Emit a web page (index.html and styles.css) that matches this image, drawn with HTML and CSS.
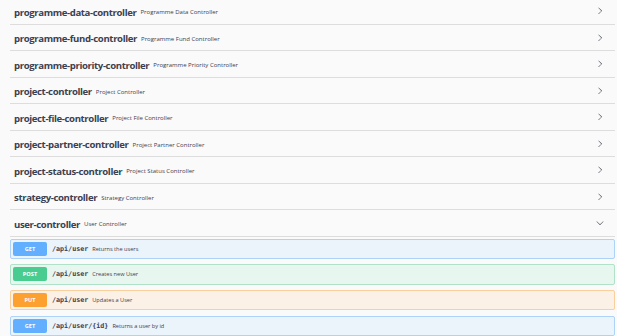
FILE: index.html
```html
<!DOCTYPE html>
<html lang="en">
<head>
<meta charset="utf-8">
<title>API</title>
<link rel="stylesheet" href="styles.css">
</head>
<body>
<div class="wrap">
  <div class="tag"><span class="tag-name">programme-data-controller</span><span class="tag-desc">Programme Data Controller</span><svg class="arrow" viewBox="0 0 20 20"><path d="M13.25 10L6.109 2.58a.697.697 0 0 1 .979-.979l7.63 7.450c.26.26.26.68 0 .94l-7.63 7.45a.697.697 0 0 1-.98-.98z"/></svg></div>
  <div class="tag"><span class="tag-name">programme-fund-controller</span><span class="tag-desc">Programme Fund Controller</span><svg class="arrow" viewBox="0 0 20 20"><path d="M13.25 10L6.109 2.58a.697.697 0 0 1 .979-.979l7.63 7.45c.26.26.26.68 0 .94l-7.63 7.45a.697.697 0 0 1-.98-.98z"/></svg></div>
  <div class="tag"><span class="tag-name">programme-priority-controller</span><span class="tag-desc">Programme Priority Controller</span><svg class="arrow" viewBox="0 0 20 20"><path d="M13.25 10L6.109 2.58a.697.697 0 0 1 .979-.979l7.63 7.45c.26.26.26.68 0 .94l-7.63 7.45a.697.697 0 0 1-.98-.98z"/></svg></div>
  <div class="tag"><span class="tag-name">project-controller</span><span class="tag-desc">Project Controller</span><svg class="arrow" viewBox="0 0 20 20"><path d="M13.25 10L6.109 2.58a.697.697 0 0 1 .979-.979l7.63 7.45c.26.26.26.68 0 .94l-7.63 7.45a.697.697 0 0 1-.98-.98z"/></svg></div>
  <div class="tag"><span class="tag-name">project-file-controller</span><span class="tag-desc">Project File Controller</span><svg class="arrow" viewBox="0 0 20 20"><path d="M13.25 10L6.109 2.58a.697.697 0 0 1 .979-.979l7.63 7.45c.26.26.26.68 0 .94l-7.63 7.45a.697.697 0 0 1-.98-.98z"/></svg></div>
  <div class="tag"><span class="tag-name">project-partner-controller</span><span class="tag-desc">Project Partner Controller</span><svg class="arrow" viewBox="0 0 20 20"><path d="M13.25 10L6.109 2.58a.697.697 0 0 1 .979-.979l7.63 7.45c.26.26.26.68 0 .94l-7.63 7.45a.697.697 0 0 1-.98-.98z"/></svg></div>
  <div class="tag"><span class="tag-name">project-status-controller</span><span class="tag-desc">Project Status Controller</span><svg class="arrow" viewBox="0 0 20 20"><path d="M13.25 10L6.109 2.58a.697.697 0 0 1 .979-.979l7.63 7.45c.26.26.26.68 0 .94l-7.63 7.45a.697.697 0 0 1-.98-.98z"/></svg></div>
  <div class="tag"><span class="tag-name">strategy-controller</span><span class="tag-desc">Strategy Controller</span><svg class="arrow" viewBox="0 0 20 20"><path d="M13.25 10L6.109 2.58a.697.697 0 0 1 .979-.979l7.63 7.45c.26.26.26.68 0 .94l-7.63 7.45a.697.697 0 0 1-.98-.98z"/></svg></div>
  <div class="tag"><span class="tag-name">user-controller</span><span class="tag-desc">User Controller</span><svg class="arrow" viewBox="0 0 20 20"><path d="M17.418 6.109c.272-.268.709-.268.979 0s.271.701 0 .969l-7.908 7.830c-.27.268-.707.268-.979 0l-7.908-7.830c-.27-.268-.27-.701 0-.969.271-.268.709-.268.979 0L10 13.25l7.418-7.141z"/></svg></div>
  <div class="ops">
    <div class="op op-get"><span class="method">GET</span><span class="path">/api/user</span><span class="op-desc">Returns the users</span></div>
    <div class="op op-post"><span class="method">POST</span><span class="path">/api/user</span><span class="op-desc">Creates new User</span></div>
    <div class="op op-put"><span class="method">PUT</span><span class="path">/api/user</span><span class="op-desc">Updates a User</span></div>
    <div class="op op-get"><span class="method">GET</span><span class="path">/api/user/{id}</span><span class="op-desc">Returns a user by id</span></div>
  </div>
</div>
</body>
</html>
```
FILE: styles.css
```css
html, body {
  margin: 0;
  padding: 0;
  background: #fafafa;
}
body {
  font-family: "Open Sans", sans-serif;
  color: #3b4151;
}
.wrap {
  margin-top: -2px;
  padding: 0 2px 0 10px;
}
.tag {
  display: flex;
  align-items: center;
  height: 26.5px;
  box-sizing: border-box;
  border-bottom: 1px solid #dddddd;
  padding: 3px 11px 0 4px;
}
.tag-name {
  font-weight: 700;
  font-size: 9.6px;
  letter-spacing: -0.38px;
}
.tag-desc {
  font-size: 6px;
  margin-left: 4px;
  flex: 1;
}
.arrow {
  width: 8px;
  height: 8px;
  margin-top: -2px;
  fill: #4a4f5c;
}
.ops {
  display: flex;
  flex-direction: column;
  gap: 5.2px;
  padding-top: 2px;
}
.op {
  display: flex;
  align-items: center;
  height: 20.5px;
  box-sizing: border-box;
  border: 1px solid;
  border-radius: 2px;
  padding: 0 2px;
}
.op-get { background: #ebf3fb; border-color: #aed3f8; }
.op-post { background: #e8f6f0; border-color: #b0e2ca; }
.op-put { background: #fbf1e6; border-color: #f9cf9c; }
.method {
  width: 34px;
  height: 14px;
  border-radius: 2px;
  color: #fff;
  font-size: 5.6px;
  font-weight: 700;
  display: flex;
  align-items: center;
  justify-content: center;
}
.op-get .method { background: #61affe; }
.op-post .method { background: #49cc90; }
.op-put .method { background: #fca130; }
.path {
  font-family: "DejaVu Sans Mono", monospace;
  font-weight: 700;
  font-size: 6.7px;
  margin-left: 5px;
}
.op-desc {
  font-size: 5.6px;
  margin-left: 4px;
}
```
